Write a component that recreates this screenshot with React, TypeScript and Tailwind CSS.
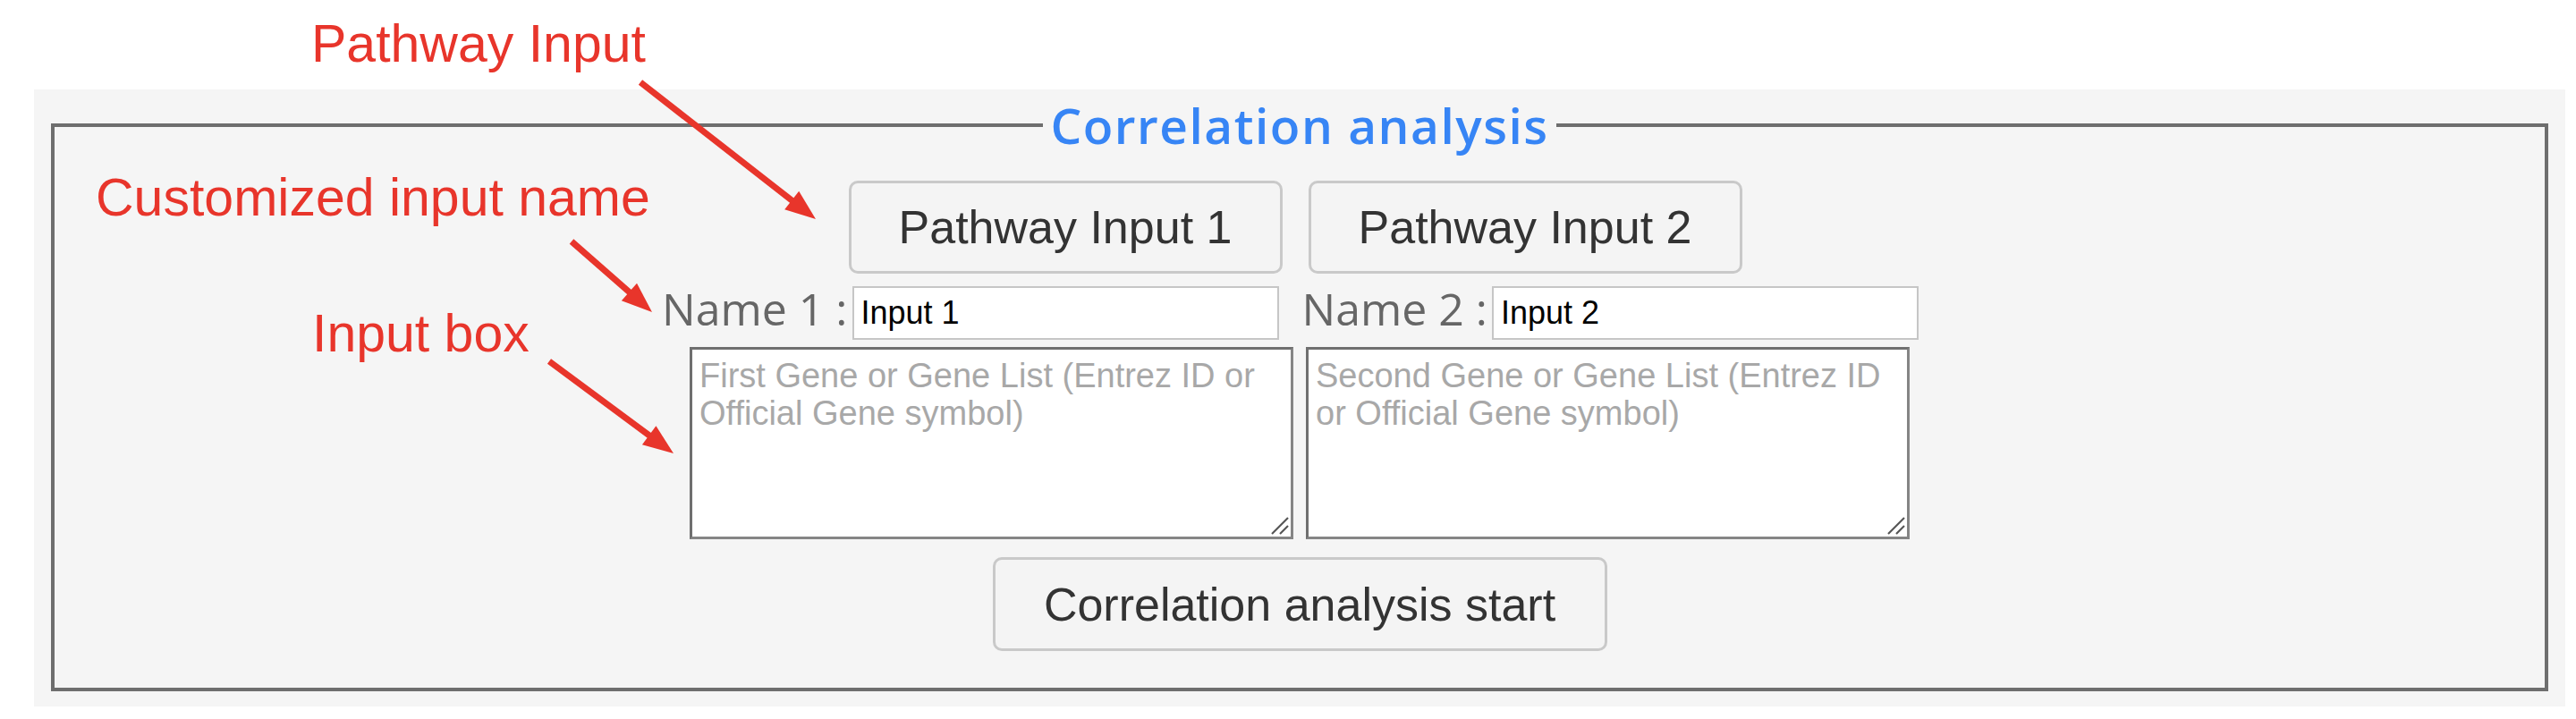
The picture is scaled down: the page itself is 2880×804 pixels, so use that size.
import React from "react";

const RED = "#e8352b";

function Arrow({ x1, y1, x2, y2 }: { x1: number; y1: number; x2: number; y2: number }) {
  const dx = x2 - x1;
  const dy = y2 - y1;
  const len = Math.hypot(dx, dy);
  const ux = dx / len;
  const uy = dy / len;
  const hl = 34;
  const hw = 13;
  const bx = x2 - ux * hl;
  const by = y2 - uy * hl;
  const px = -uy;
  const py = ux;
  return (
    <g>
      <line x1={x1} y1={y1} x2={bx + ux * 4} y2={by + uy * 4} stroke={RED} strokeWidth={7} />
      <polygon
        points={`${x2},${y2} ${bx + px * hw},${by + py * hw} ${bx - px * hw},${by - py * hw}`}
        fill={RED}
      />
    </g>
  );
}

function PathwayButton({ label }: { label: string }) {
  return (
    <button
      type="button"
      className="w-[485px] h-[104px] rounded-[10px] border-[3px] border-[#c9c9c9] bg-[#f4f4f4] text-[52px] leading-none text-[#333333] font-['Liberation_Sans',Arial,sans-serif]"
    >
      {label}
    </button>
  );
}

function NameField({ label, value }: { label: string; value: string }) {
  return (
    <div className="flex items-start">
      <span className="text-[50px] leading-[50px] text-[#666666] font-['Open_Sans',sans-serif] mr-[5px] whitespace-nowrap">
        {label}
      </span>
      <input
        type="text"
        defaultValue={value}
        className="w-[477px] h-[60px] border-2 border-[#c6c6c6] bg-white px-[8px] text-[36px] text-black font-['Liberation_Sans',Arial,sans-serif] outline-none"
      />
    </div>
  );
}

function GeneBox({ placeholder }: { placeholder: string }) {
  return (
    <div className="relative">
      <textarea
        placeholder={placeholder}
        className="block w-[675px] h-[215px] resize-none border-[3px] border-t-[#6f6f6f] border-l-[#6f6f6f] border-r-[#858585] border-b-[#858585] bg-white px-[8px] pt-[8px] text-[38px] leading-[42px] text-black placeholder:text-[#a8a8a8] font-['Liberation_Sans',Arial,sans-serif] outline-none"
      />
      <svg
        className="absolute right-[5px] bottom-[5px] pointer-events-none"
        width={22}
        height={22}
        viewBox="0 0 22 22"
      >
        <line x1={21} y1={3} x2={3} y2={21} stroke="#555" strokeWidth={2.2} />
        <line x1={21} y1={12} x2={12} y2={21} stroke="#555" strokeWidth={2.2} />
      </svg>
    </div>
  );
}

export default function App() {
  return (
    <div className="relative w-[2880px] h-[804px] bg-white overflow-hidden">
      <div className="h-[100px]" />
      <div className="ml-[38px] w-[2830px] h-[690px] bg-[#f5f5f5] px-[19px] pt-[10px] pb-[17px] flex">
        <fieldset className="flex-1 min-w-0 border-4 border-[#6e6e6e]">
          <legend className="mx-auto px-[8px] text-[55px] leading-[60px] tracking-[1.5px] font-semibold text-[#3785f5] font-['Open_Sans',sans-serif]">
            Correlation analysis
          </legend>
          <div className="flex flex-col items-center pt-[32px]">
            <div className="flex gap-[29px] pr-[10px]">
              <PathwayButton label="Pathway Input 1" />
              <PathwayButton label="Pathway Input 2" />
            </div>
            <div className="mt-[14px] flex gap-[26px] pr-[21px]">
              <NameField label="Name 1 :" value="Input 1" />
              <NameField label="Name 2 :" value="Input 2" />
            </div>
            <div className="mt-[8px] flex gap-[14px]">
              <GeneBox placeholder="First Gene or Gene List (Entrez ID or Official Gene symbol)" />
              <GeneBox placeholder="Second Gene or Gene List (Entrez ID or Official Gene symbol)" />
            </div>
            <button
              type="button"
              className="mt-[20px] w-[687px] h-[105px] rounded-[10px] border-[3px] border-[#c9c9c9] bg-[#f4f4f4] text-[52px] leading-none text-[#333333] font-['Liberation_Sans',Arial,sans-serif]"
            >
              Correlation analysis start
            </button>
          </div>
        </fieldset>
      </div>

      <div className="absolute inset-0 pointer-events-none">
        <div className="absolute left-[348px] top-[20px] text-[59px] leading-[59px] text-[#e8352b] font-['Liberation_Sans',Arial,sans-serif] whitespace-nowrap">
          Pathway Input
        </div>
        <div className="absolute left-[107px] top-[192px] text-[59px] leading-[59px] text-[#e8352b] font-['Liberation_Sans',Arial,sans-serif] whitespace-nowrap">
          Customized input name
        </div>
        <div className="absolute left-[349px] top-[344px] text-[59px] leading-[59px] text-[#e8352b] font-['Liberation_Sans',Arial,sans-serif] whitespace-nowrap">
          Input box
        </div>
        <svg className="absolute inset-0" width={2880} height={804} viewBox="0 0 2880 804">
          <Arrow x1={716} y1={92} x2={912} y2={245} />
          <Arrow x1={639} y1={270} x2={729} y2={349} />
          <Arrow x1={614} y1={404} x2={753} y2={507} />
        </svg>
      </div>
    </div>
  );
}
